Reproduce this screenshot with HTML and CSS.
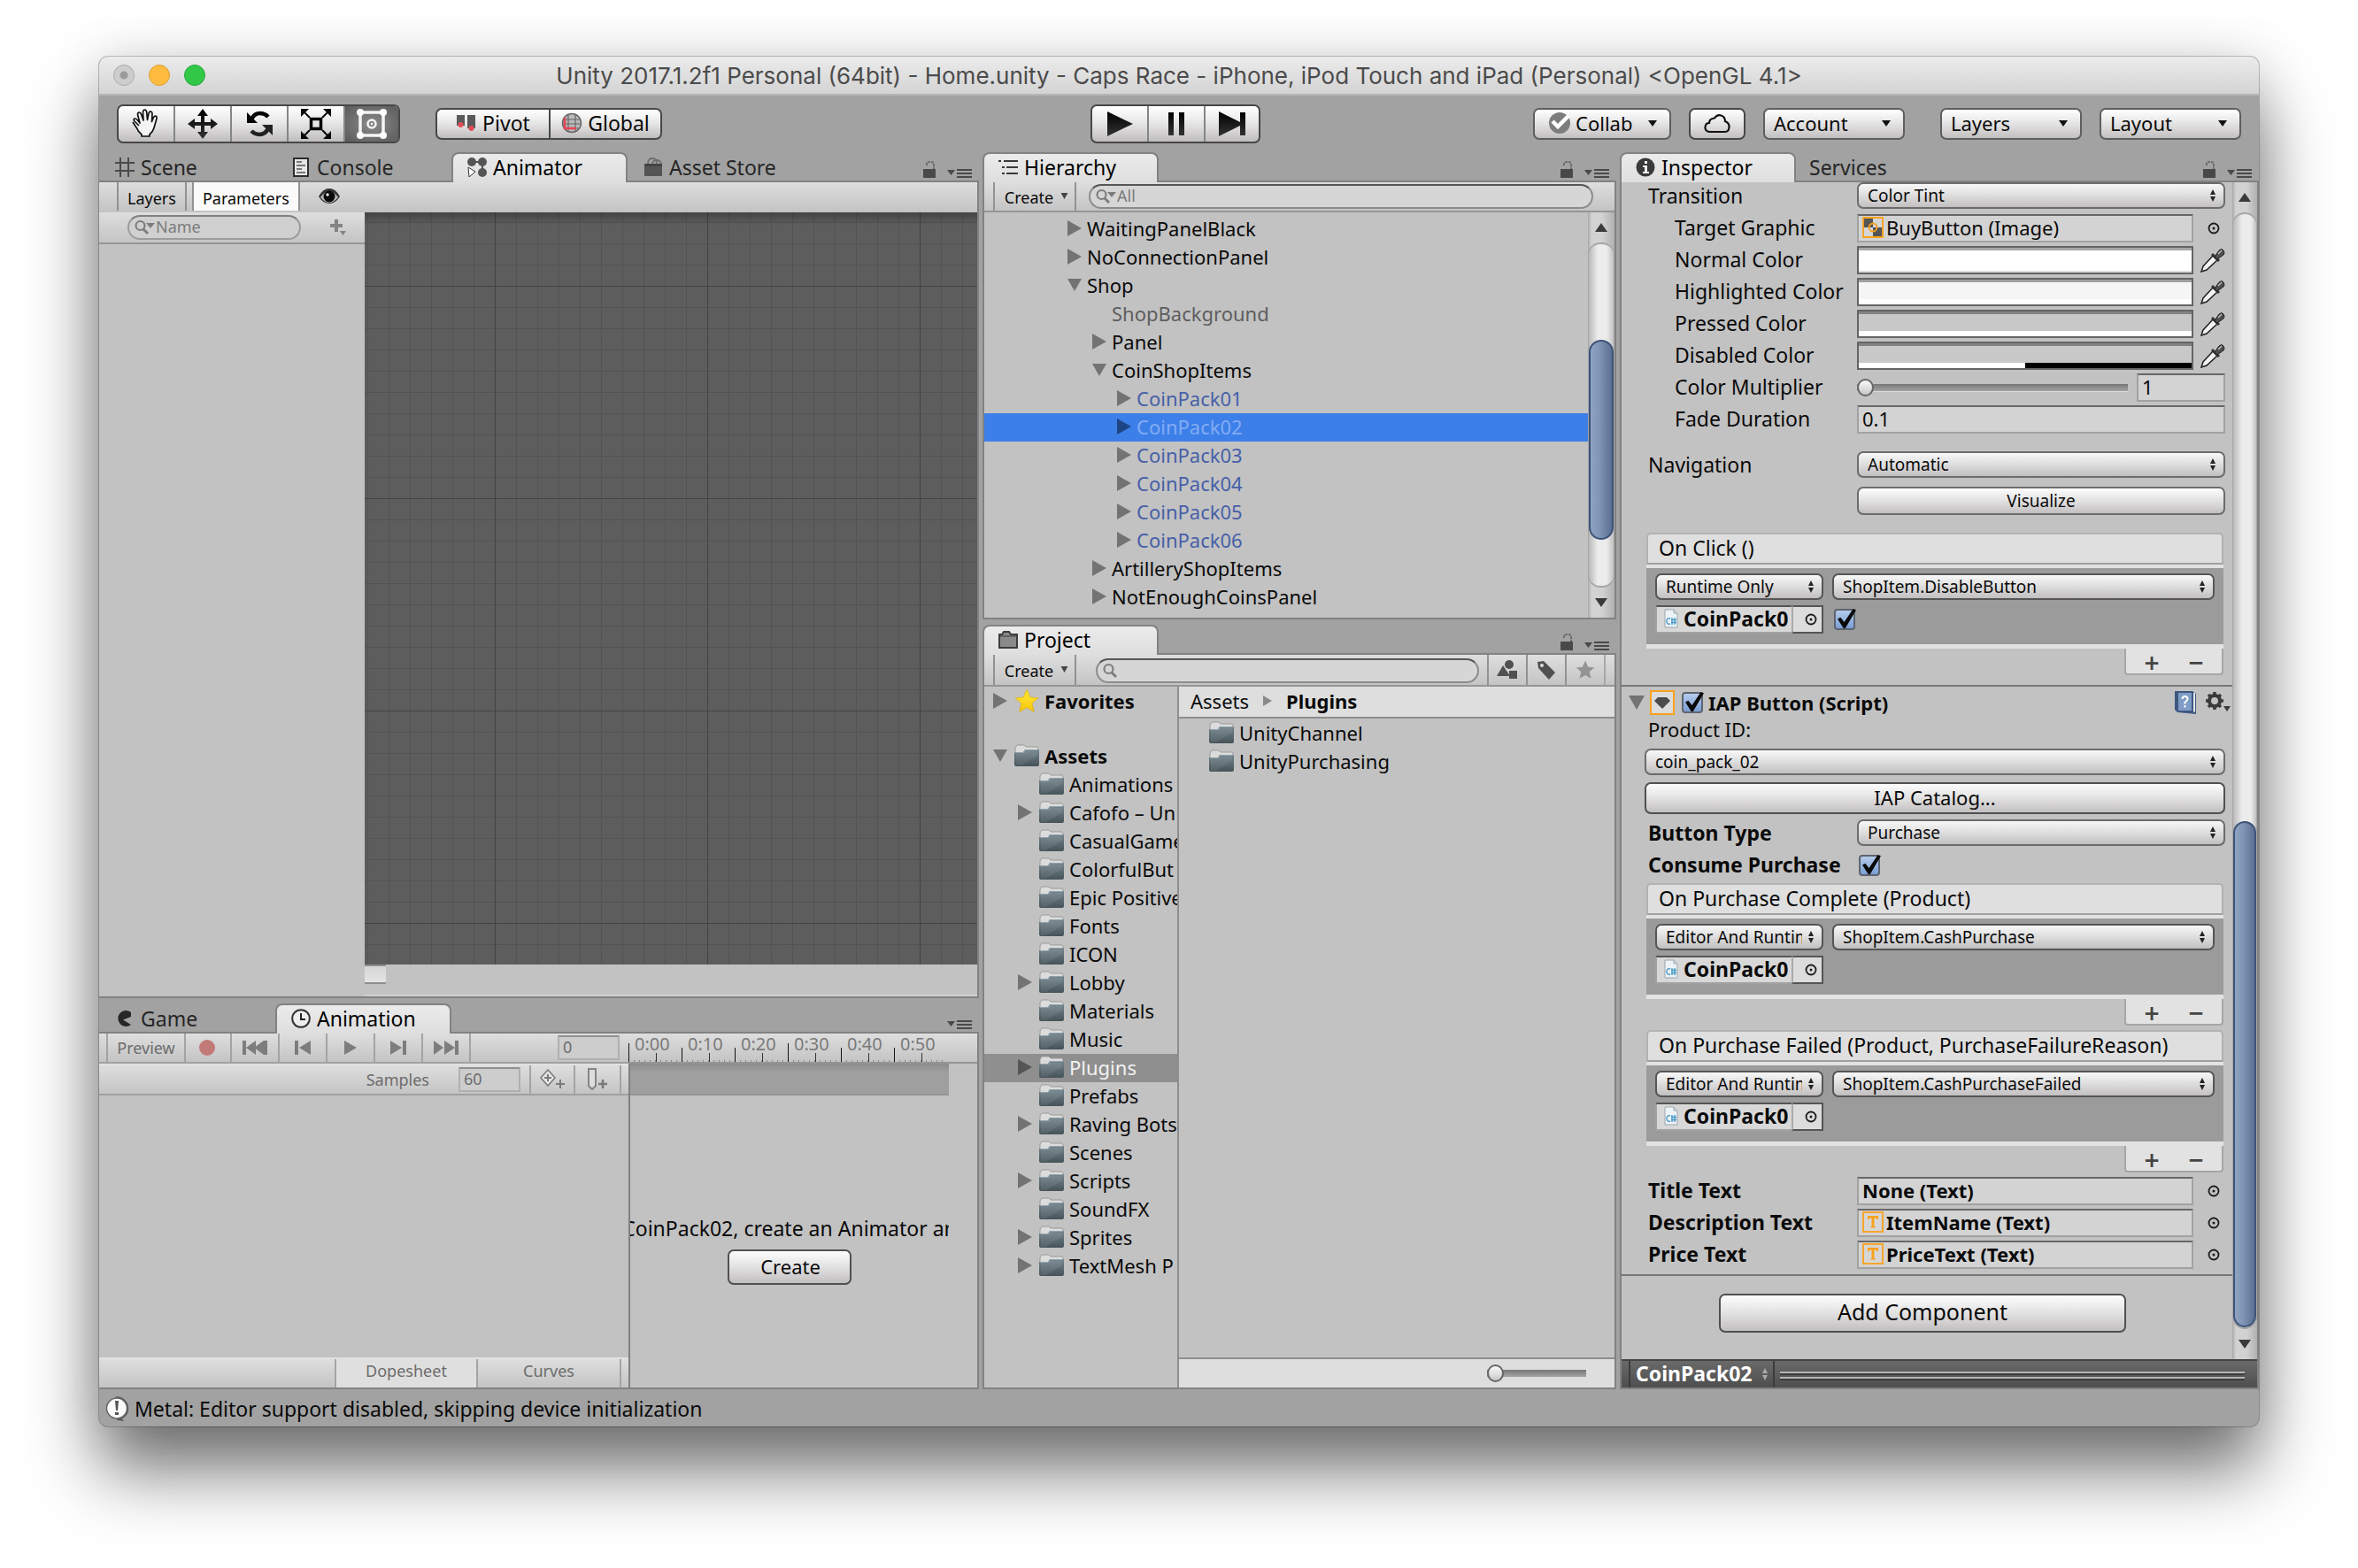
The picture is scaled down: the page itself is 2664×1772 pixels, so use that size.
FILE: index.html
```html
<!DOCTYPE html>
<html lang="en">
<head>
<meta charset="utf-8">
<title>Unity 2017.1.2f1 Personal</title>
<link rel="stylesheet" href="styles.css">
</head>
<body>
<svg class="sprite" aria-hidden="true">
  <defs>
    <linearGradient id="g-folder" x1="0" y1="0" x2="0" y2="1"><stop offset="0" stop-color="#75868e"/><stop offset="1" stop-color="#465359"/></linearGradient>
    <linearGradient id="g-star" x1="0" y1="0" x2="0" y2="1"><stop offset="0" stop-color="#ffe93a"/><stop offset="1" stop-color="#f7c60a"/></linearGradient>
    <linearGradient id="g-dark" x1="0" y1="0" x2="0" y2="1"><stop offset="0" stop-color="#000"/><stop offset="1" stop-color="#333"/></linearGradient>
  </defs>
  <symbol id="folder" viewBox="0 0 28 26">
    <path d="M1 8V4l2-3h8l2 2h13l1 2v5H1z" fill="#dcdcdc" stroke="#9a9a9a" stroke-width="1"/>
    <path d="M0 9h10l2-3h16v17q0 2-2 2H2q-2 0-2-2z" fill="url(#g-folder)"/>
    <path d="M12 8h14v5L8 24H2V10h8z" fill="#fff" opacity=".07"/>
    <path d="M1 9.500h10l2-3h14" fill="none" stroke="#8fa3ad" stroke-width="1"/>
  </symbol>
  <symbol id="star" viewBox="0 0 28 28"><path d="M14 1l4 9 9 .8-7 6.200 2.300 9.500L14 21.500 5.700 26.500 8 17 1 10.800 10 10z" fill="url(#g-star)" stroke="#d9a400" stroke-width=".6"/></symbol>
  <symbol id="right" viewBox="0 0 16 18"><path d="M0 0l16 9-16 9z"/></symbol>
  <symbol id="down" viewBox="0 0 18 16"><path d="M0 0h18l-9 16z"/></symbol>
  <symbol id="lock" viewBox="0 0 16 20"><path d="M1 9h14v10H1z" fill="#494949"/><path d="M5 5V3q0-2 3-2h2q3 0 3 3v5" fill="none" stroke="#6a6a6a" stroke-width="2" stroke-dasharray="3 1"/></symbol>
  <symbol id="menu" viewBox="0 0 28 12"><path d="M0 2h9L4.500 8z" fill="#494949"/><path d="M11 1h17v2H11zM11 5h17v2H11zM11 9h17v2H11z" fill="#494949"/></symbol>
  <symbol id="search" viewBox="0 0 24 18"><circle cx="6.500" cy="7" r="5" fill="none" stroke="#7d7d7d" stroke-width="2.200"/><path d="M10 11l5 5" stroke="#7d7d7d" stroke-width="3"/></symbol>
  <symbol id="searchmenu" viewBox="0 0 24 18"><circle cx="6.500" cy="7" r="5" fill="none" stroke="#7d7d7d" stroke-width="2.200"/><path d="M10 11l5 5" stroke="#7d7d7d" stroke-width="3"/><path d="M13 4h10l-5 6z" fill="#7d7d7d"/></symbol>
  <symbol id="picker" viewBox="0 0 14 14"><circle cx="7" cy="7" r="5.500" fill="none" stroke="#1c1c1c" stroke-width="1.800"/><circle cx="7" cy="7" r="1.500" fill="#1c1c1c"/></symbol>
  <symbol id="dropper" viewBox="0 0 28 28">
    <path d="M1 27l2-6L14 9l5 5L7 25z" fill="#f2f2f2" stroke="#222" stroke-width="1.500"/>
    <path d="M13 7l8 8" stroke="#333" stroke-width="3"/><path d="M16 10l5-7q3-3 5 0t0 5l-7 5z" fill="#4e4e4e" stroke="#222"/><path d="M20 7l4-4" stroke="#bbb" stroke-width="1.500"/>
  </symbol>
  <symbol id="cs" viewBox="0 0 16 22"><path d="M1 1h10l4 4v16H1z" fill="#eef3f6" stroke="#9aa7b0"/><path d="M11 1v4h4" fill="#cfdae0" stroke="#9aa7b0"/><path d="M7 11q-4-1-4 3t4 3M9 10v8M12 10v8M8 12.500h6M8 15.500h6" fill="none" stroke="#4a9cc8" stroke-width="1.400"/></symbol>
  <symbol id="texticon" viewBox="0 0 24 24"><rect x="1" y="1" width="22" height="22" fill="#d6d6d6" stroke="#f9a11b" stroke-width="1.800"/><path d="M6 5h12v4h-1.500l-1-1.500h-2V17l2 1.500H8.500l2-1.500V7.500h-2l-1 1.500H6z" fill="#f9a11b"/></symbol>
</svg>

<main class="window">
  <header class="titlebar">
    <div class="lights"><i class="light off"></i><i class="light min"></i><i class="light max"></i></div>
    <h1 class="title">Unity 2017.1.2f1 Personal (64bit) - Home.unity - Caps Race - iPhone, iPod Touch and iPad (Personal) &lt;OpenGL 4.1&gt;</h1>
  </header>

  <nav class="toolbar">
    <div class="tools">
      <div class="group tall">
        <button class="seg" aria-label="Hand"><svg width="36" height="36" viewBox="0 0 36 36"><path d="M10 20L4.500 14.500q-1-2.500 1-2.500 1.500 0 3.500 2.500L11 17 8.500 7.500q0-2.500 1.500-2.500t2.500 2l2.500 7-.5-9.500q.5-2.500 2-2.500t2.200 2.500l.8 9 1.500-7.500q1-2.500 2.500-2t1.500 2.500l-.5 9 2-5q1.500-2 2.800-1.200t.7 2.700l-3 10.500q-1.500 5-5 7.500v2h-9v-2q-4-3-5-6.500L3 16" fill="#f4f4f4" stroke="#111" stroke-width="1.700" stroke-linejoin="round"/></svg></button>
        <button class="seg" aria-label="Move"><svg width="36" height="36" viewBox="0 0 36 36"><path d="M18 1l6 8h-4v7h7v-4l8 6-8 6v-4h-7v7h4l-6 8-6-8h4v-7H9v4l-8-6 8-6v4h7V9h-4z" fill="url(#g-dark)"/></svg></button>
        <button class="seg" aria-label="Rotate"><svg width="36" height="36" viewBox="0 0 36 36"><path d="M9 13q3-7 10-7 5 0 9 4" fill="none" stroke="#050505" stroke-width="4.500"/><path d="M4 5v12h12z" fill="#050505"/><path d="M28 23q-3 7-10 7-5 0-9-4" fill="none" stroke="#222" stroke-width="4.500"/><path d="M33 31V19H21z" fill="#222"/></svg></button>
        <button class="seg" aria-label="Scale"><svg width="36" height="36" viewBox="0 0 36 36" fill="none" stroke="#080808"><rect x="12.500" y="12.500" width="11" height="11" stroke-width="3.500"/><path d="M11 11L4 4M25 11l7-7M11 25l-7 7M25 25l7 7" stroke-width="2"/><path d="M1 1h9L1 10zM35 1v9l-9-9zM1 35v-9l9 9zM35 35h-9l9-9z" fill="#080808" stroke="none"/></svg></button>
        <button class="seg pressed" aria-label="Rect"><svg width="36" height="36" viewBox="0 0 36 36" fill="none" stroke="#f4f4f4"><path d="M5 5h26v26H5z" stroke-width="3.500"/><g fill="#fff" stroke="none"><circle cx="5" cy="5" r="4"/><circle cx="31" cy="5" r="4"/><circle cx="5" cy="31" r="4"/><circle cx="31" cy="31" r="4"/></g><circle cx="18" cy="18" r="4.500" stroke-width="2.500"/><circle cx="18" cy="18" r="1.200" fill="#fff" stroke="none"/></svg></button>
      </div>
      <div class="group short">
        <button class="seg wide"><svg width="24" height="20" viewBox="0 0 24 20"><path d="M1 1h9v12H1zM13 1h9v15h-9z" fill="#5a5a5a"/><circle cx="5.500" cy="12" r="3" fill="#e24b57"/><circle cx="17.500" cy="16" r="3" fill="#e24b57"/></svg>Pivot</button>
        <button class="seg wide"><svg width="24" height="24" viewBox="0 0 24 24"><circle cx="12" cy="12" r="10.500" fill="#b9b9b9" stroke="#666" stroke-width="1.500"/><path d="M2 8h20M2 13h20M4 18h16M8 2v20M16 2v20" stroke="#666" stroke-width="1.200"/><path d="M4 6v12h13" fill="none" stroke="#ea4456" stroke-width="2.500"/></svg>Global</button>
      </div>
    </div>
    <div class="group tall play">
      <button class="seg" aria-label="Play"><svg width="32" height="32" viewBox="0 0 32 32"><path d="M2 2l29 14L2 30z" fill="url(#g-dark)"/></svg></button>
      <button class="seg" aria-label="Pause"><svg width="32" height="32" viewBox="0 0 32 32"><path d="M7 3h6v26H7zM19 3h6v26h-6z" fill="url(#g-dark)"/></svg></button>
      <button class="seg" aria-label="Step"><svg width="32" height="32" viewBox="0 0 32 32"><path d="M1 2l24 12V3h6v26h-6V18L1 30z" fill="url(#g-dark)"/></svg></button>
    </div>
    <div class="services">
      <button class="pop collab"><svg width="30" height="26" viewBox="0 0 30 26"><circle cx="14" cy="13" r="12" fill="#7d7d7d"/><path d="M6 11l6 6L24 5" fill="none" stroke="#fff" stroke-width="4.500"/></svg>Collab<i class="caret"></i></button>
      <button class="pop cloud" aria-label="Cloud"><svg width="30" height="24" viewBox="0 0 30 24"><path d="M6 21q-5-1-4.500-5.500T6 11q0-5 6-5.500Q15 1 19.500 2.500T24 9q5 2 4.500 7T24 21z" fill="none" stroke="#111" stroke-width="2.200"/></svg></button>
      <button class="pop">Account<i class="caret"></i></button>
      <button class="pop layers">Layers<i class="caret"></i></button>
      <button class="pop">Layout<i class="caret"></i></button>
    </div>
  </nav>

  <div class="workspace">
    <div class="column left-column">
      <section class="pane">
        <div class="tabs">
          <button class="tab"><svg width="22" height="22" viewBox="0 0 22 22" stroke="#4a4a4a" stroke-width="2"><path d="M6 0v22M15 0v22M0 6h22M0 15h22"/></svg>Scene</button>
          <button class="tab"><svg width="22" height="22" viewBox="0 0 22 22"><path d="M3 1h16v20H3z" fill="#e6e6e6" stroke="#2d2d2d" stroke-width="2"/><path d="M6 5h6M6 9h10M6 13h6M6 17h10" stroke="#555" stroke-width="1.500"/></svg>Console</button>
          <button class="tab active"><svg width="22" height="22" viewBox="0 0 22 22" fill="#555"><circle cx="5" cy="5" r="5"/><circle cx="17" cy="5" r="5"/><circle cx="17" cy="17" r="5"/><path d="M5 5h12v12" fill="none" stroke="#555" stroke-width="2"/><path d="M1 11l8 5-7 6z" fill="#fff" stroke="#333"/></svg>Animator</button>
          <button class="tab"><svg width="22" height="22" viewBox="0 0 22 22"><path d="M1 7h20v14H1z" fill="#555"/><path d="M1 7h20v3H1z" fill="#444"/><path d="M5 7q0-6 5-6t5 6M10 7q1-4 5-4t5 4" fill="none" stroke="#6e6e6e" stroke-width="1.800"/></svg>Asset Store</button>
          <div class="tab-tools"><svg width="16" height="20"><use href="#lock"/></svg><svg width="28" height="12"><use href="#menu"/></svg></div>
        </div>
        <div class="pane-body">
          <div class="bar animator-bar">
            <button class="bar-btn">Layers</button>
            <button class="bar-btn on">Parameters</button>
            <svg class="eye" width="26" height="20" viewBox="0 0 26 20"><path d="M1 10Q6 1 13 1t12 9q-5 8-12 8T1 10z" fill="#333"/><path d="M3 11q5-7 10-7t10 7q-5 6-10 6T3 11z" fill="#bbb"/><circle cx="13" cy="10" r="6.500" fill="#0a0a0a"/><circle cx="11" cy="8" r="1.700" fill="#eee"/></svg>
          </div>
          <div class="animator">
            <div class="params">
              <div class="bar params-bar">
                <label class="search dim"><svg width="24" height="18"><use href="#searchmenu"/></svg><input type="text" placeholder="Name" aria-label="Parameter name"></label>
                <svg width="20" height="20" viewBox="0 0 20 20" fill="#838383"><path d="M6 1h4v5h5v4h-5v5H6v-5H1V6h5zM12 14h7l-3.500 5z"/></svg>
              </div>
            </div>
            <div class="graph-wrap">
              <div class="graph"></div>
              <div class="graph-foot"><i class="knob"></i></div>
            </div>
          </div>
        </div>
      </section>

      <section class="pane">
        <div class="tabs">
          <button class="tab"><svg width="22" height="22" viewBox="0 0 22 22"><path d="M18 4A9 9 0 1 0 18 18L9 12.500 18 9z" fill="#262626"/></svg>Game</button>
          <button class="tab active"><svg width="22" height="22" viewBox="0 0 22 22"><circle cx="11" cy="11" r="9.800" fill="#eee" stroke="#333" stroke-width="2"/><path d="M11 5v7h5" fill="none" stroke="#222" stroke-width="2"/></svg>Animation</button>
          <div class="tab-tools"><svg width="28" height="12"><use href="#menu"/></svg></div>
        </div>
        <div class="pane-body animation">
          <div class="clip">
            <div class="bar">
              <button class="bar-btn dis preview">Preview</button>
              <button class="bar-btn dis record" aria-label="Record"><svg width="18" height="18" viewBox="0 0 18 18"><circle cx="9" cy="9" r="9" fill="#c17a77"/></svg></button>
              <button class="bar-btn dis" aria-label="First frame"><svg width="28" height="16" viewBox="0 0 28 16" fill="#7d7d7d"><path d="M0 0h4v16H0zM15 0v16L4 8zM24 0v16L13 8zM24 0h4v16h-4z"/></svg></button>
              <button class="bar-btn dis" aria-label="Previous frame"><svg width="18" height="16" viewBox="0 0 18 16" fill="#7d7d7d"><path d="M0 0h4v16H0zM18 0v16L5 8z"/></svg></button>
              <button class="bar-btn dis" aria-label="Play clip"><svg width="14" height="16" viewBox="0 0 14 16" fill="#7d7d7d"><path d="M0 0l14 8-14 8z"/></svg></button>
              <button class="bar-btn dis" aria-label="Next frame"><svg width="18" height="16" viewBox="0 0 18 16" fill="#7d7d7d"><path d="M14 0h4v16h-4zM0 0v16l13-8z"/></svg></button>
              <button class="bar-btn dis" aria-label="Last frame"><svg width="28" height="16" viewBox="0 0 28 16" fill="#7d7d7d"><path d="M24 0h4v16h-4zM0 0v16l11-8zM12 0v16l12-8z"/></svg></button>
              <input class="num frame" type="text" value="0" aria-label="Frame">
            </div>
            <div class="bar second">
              <label class="samples" for="samples">Samples</label>
              <input class="num" id="samples" type="text" value="60">
              <button class="bar-btn dis first" aria-label="Add keyframe"><svg width="28" height="24" viewBox="0 0 28 24"><path d="M9 1l8 9-8 9-8-9z" fill="#e4e4e4" stroke="#7a7a7a" stroke-width="1.500"/><path d="M5 10h8M9 6v8M18 17h10M23 12v10" stroke="#7a7a7a" stroke-width="2"/></svg></button>
              <button class="bar-btn dis" aria-label="Add event"><svg width="24" height="26" viewBox="0 0 24 26"><path d="M2 1h8v19l-4 4-4-4z" fill="#ddd" stroke="#858585" stroke-width="2"/><path d="M13 18h10M18 13v10" stroke="#7a7a7a" stroke-width="2.500"/></svg></button>
            </div>
            <div class="clip-list"></div>
            <div class="bar modes">
              <button class="mode on">Dopesheet</button>
              <button class="mode">Curves</button>
            </div>
          </div>
          <div class="timeline">
            <div class="bar ruler"><span class="tick tall-tick">0:00</span><span class="tick">0:10</span><span class="tick">0:20</span><span class="tick tall-tick">0:30</span><span class="tick">0:40</span><span class="tick">0:50</span></div>
            <div class="sheet">
              <div class="events"></div>
              <p class="hint"><span>CoinPack02, create an Animator an</span></p>
              <button class="btn create">Create</button>
            </div>
          </div>
        </div>
      </section>
    </div>

    <div class="column mid-column">
      <section class="pane">
        <div class="tabs">
          <button class="tab active"><svg width="22" height="18" viewBox="0 0 22 18" fill="#3a3a3a"><path d="M0 1h3v2H0zM6 1h16v2H6zM4 8h3v2H4zM9 8h13v2H9zM4 15h3v2H4zM9 15h13v2H9z"/></svg>Hierarchy</button>
          <div class="tab-tools"><svg width="16" height="20"><use href="#lock"/></svg><svg width="28" height="12"><use href="#menu"/></svg></div>
        </div>
        <div class="pane-body framed">
          <div class="bar">
            <button class="bar-btn createmenu">Create<svg width="9" height="7"><use href="#down"/></svg></button>
            <label class="search"><svg width="24" height="18"><use href="#searchmenu"/></svg><input type="text" placeholder="All" aria-label="Search hierarchy"></label>
          </div>
          <div class="scroll-area">
            <ul class="tree hierarchy">
              <li class="l0"><svg class="fold" width="16" height="18"><use href="#right"/></svg>WaitingPanelBlack</li>
              <li class="l0"><svg class="fold" width="16" height="18"><use href="#right"/></svg>NoConnectionPanel</li>
              <li class="l0"><svg class="fold" width="18" height="16"><use href="#down"/></svg>Shop</li>
              <li class="l1 leaf inactive">ShopBackground</li>
              <li class="l1"><svg class="fold" width="16" height="18"><use href="#right"/></svg>Panel</li>
              <li class="l1"><svg class="fold" width="18" height="16"><use href="#down"/></svg>CoinShopItems</li>
              <li class="l2 prefab"><svg class="fold" width="16" height="18"><use href="#right"/></svg>CoinPack01</li>
              <li class="l2 prefab selected"><svg class="fold" width="16" height="18"><use href="#right"/></svg>CoinPack02</li>
              <li class="l2 prefab"><svg class="fold" width="16" height="18"><use href="#right"/></svg>CoinPack03</li>
              <li class="l2 prefab"><svg class="fold" width="16" height="18"><use href="#right"/></svg>CoinPack04</li>
              <li class="l2 prefab"><svg class="fold" width="16" height="18"><use href="#right"/></svg>CoinPack05</li>
              <li class="l2 prefab"><svg class="fold" width="16" height="18"><use href="#right"/></svg>CoinPack06</li>
              <li class="l1"><svg class="fold" width="16" height="18"><use href="#right"/></svg>ArtilleryShopItems</li>
              <li class="l1"><svg class="fold" width="16" height="18"><use href="#right"/></svg>NotEnoughCoinsPanel</li>
            </ul>
            <div class="sbar"><i class="up"></i><div class="track track-hier"><i class="thumb"></i></div><i class="dn"></i></div>
          </div>
        </div>
      </section>

      <section class="pane">
        <div class="tabs">
          <button class="tab active"><svg width="22" height="22" viewBox="0 0 22 22"><path d="M1 5h3l2-3h6l2 3h7v15H1z" fill="#8a8a8a" stroke="#3c3c3c" stroke-width="2"/><path d="M1 7h20" stroke="#3c3c3c"/></svg>Project</button>
          <div class="tab-tools"><svg width="16" height="20"><use href="#lock"/></svg><svg width="28" height="12"><use href="#menu"/></svg></div>
        </div>
        <div class="pane-body framed">
          <div class="bar project-bar">
            <button class="bar-btn createmenu">Create<svg width="9" height="7"><use href="#down"/></svg></button>
            <label class="search"><svg width="24" height="18"><use href="#search"/></svg><input type="text" aria-label="Search assets"></label>
            <button class="bar-btn icon" aria-label="Filter by type"><svg width="24" height="22" viewBox="0 0 24 22" fill="#505050"><circle cx="14" cy="5" r="5"/><path d="M7 6l8 12H0zM14 12h9v9h-9z"/></svg></button>
            <button class="bar-btn icon" aria-label="Filter by label"><svg width="24" height="24" viewBox="0 0 24 24"><path d="M2 3l7-1 13 13-7 8L3 10z" fill="#505050"/><circle cx="7" cy="7" r="2" fill="#ddd"/></svg></button>
            <button class="bar-btn icon" aria-label="Save search"><svg width="22" height="22" viewBox="0 0 28 28"><path d="M14 1l4 9 9 .8-7 6.200 2.300 9.500L14 21.500 5.700 26.500 8 17 1 10.800 10 10z" fill="#939393"/></svg></button>
          </div>
          <div class="project">
            <ul class="tree folders">
              <li class="root"><svg class="fold" width="16" height="18"><use href="#right"/></svg><svg width="28" height="28"><use href="#star"/></svg>Favorites</li>
              <li class="root assets"><svg class="fold" width="18" height="16"><use href="#down"/></svg><svg width="28" height="26"><use href="#folder"/></svg>Assets</li>
              <li class="leaf"><svg width="28" height="26"><use href="#folder"/></svg>Animations</li>
              <li><svg class="fold" width="16" height="18"><use href="#right"/></svg><svg width="28" height="26"><use href="#folder"/></svg>Cafofo – Un</li>
              <li class="leaf"><svg width="28" height="26"><use href="#folder"/></svg>CasualGame</li>
              <li class="leaf"><svg width="28" height="26"><use href="#folder"/></svg>ColorfulBut</li>
              <li class="leaf"><svg width="28" height="26"><use href="#folder"/></svg>Epic Positive</li>
              <li class="leaf"><svg width="28" height="26"><use href="#folder"/></svg>Fonts</li>
              <li class="leaf"><svg width="28" height="26"><use href="#folder"/></svg>ICON</li>
              <li><svg class="fold" width="16" height="18"><use href="#right"/></svg><svg width="28" height="26"><use href="#folder"/></svg>Lobby</li>
              <li class="leaf"><svg width="28" height="26"><use href="#folder"/></svg>Materials</li>
              <li class="leaf"><svg width="28" height="26"><use href="#folder"/></svg>Music</li>
              <li class="current"><svg class="fold" width="16" height="18"><use href="#right"/></svg><svg width="28" height="26"><use href="#folder"/></svg>Plugins</li>
              <li class="leaf"><svg width="28" height="26"><use href="#folder"/></svg>Prefabs</li>
              <li><svg class="fold" width="16" height="18"><use href="#right"/></svg><svg width="28" height="26"><use href="#folder"/></svg>Raving Bots</li>
              <li class="leaf"><svg width="28" height="26"><use href="#folder"/></svg>Scenes</li>
              <li><svg class="fold" width="16" height="18"><use href="#right"/></svg><svg width="28" height="26"><use href="#folder"/></svg>Scripts</li>
              <li class="leaf"><svg width="28" height="26"><use href="#folder"/></svg>SoundFX</li>
              <li><svg class="fold" width="16" height="18"><use href="#right"/></svg><svg width="28" height="26"><use href="#folder"/></svg>Sprites</li>
              <li><svg class="fold" width="16" height="18"><use href="#right"/></svg><svg width="28" height="26"><use href="#folder"/></svg>TextMesh P</li>
            </ul>
            <div class="contents">
              <div class="crumbs"><a href="#assets">Assets</a><svg width="10" height="12" viewBox="0 0 16 18" preserveAspectRatio="none" fill="#8a8a8a"><path d="M0 0l16 9-16 9z"/></svg><b>Plugins</b></div>
              <ul class="tree files">
                <li><svg width="28" height="26"><use href="#folder"/></svg>UnityChannel</li>
                <li><svg width="28" height="26"><use href="#folder"/></svg>UnityPurchasing</li>
              </ul>
              <div class="zoombar"><input class="range" type="range" min="0" max="100" value="0" aria-label="Icon size"></div>
            </div>
          </div>
        </div>
      </section>
    </div>

    <div class="column">
      <section class="pane">
        <div class="tabs">
          <button class="tab active"><svg width="22" height="22" viewBox="0 0 22 22"><circle cx="11" cy="11" r="10.500" fill="#3a3a3a"/><path d="M8 9h5v7h2v2H8v-2h2v-5H8zM10 4h3v3h-3z" fill="#f2f2f2"/></svg>Inspector</button>
          <button class="tab plain">Services</button>
          <div class="tab-tools"><svg width="16" height="20"><use href="#lock"/></svg><svg width="28" height="12"><use href="#menu"/></svg></div>
        </div>
        <div class="pane-body framed">
          <div class="scroll-area">
            <div class="inspector">
              <div class="component">
                <div class="field"><label for="transition">Transition</label><span class="select"><select id="transition"><option>Color Tint</option></select></span></div>
                <div class="field sub"><span>Target Graphic</span><div class="object"><button class="slot"><svg width="24" height="24" viewBox="0 0 24 24"><path d="M1 1h22v22H1z" fill="#d6d6d6"/><path d="M1 1h11v11H1zM12 12h11v11H12z" fill="#555"/><path d="M1 1h22v22H1z" fill="none" stroke="#f9a11b" stroke-width="1.800"/><circle cx="12" cy="12" r="4.500" fill="none" stroke="#f9a11b" stroke-width="1.800"/></svg>BuyButton (Image)</button><button class="pick" aria-label="Pick target graphic"><svg width="14" height="14"><use href="#picker"/></svg></button></div></div>
                <div class="field sub"><label for="c-normal">Normal Color</label><div class="color"><span class="swatch"><input type="color" id="c-normal" value="#ffffff"><i class="alpha faint"></i></span><button class="drop" aria-label="Pick normal color"><svg width="28" height="28"><use href="#dropper"/></svg></button></div></div>
                <div class="field sub"><label for="c-high">Highlighted Color</label><div class="color"><span class="swatch"><input type="color" id="c-high" value="#f5f5f5"><i class="alpha"></i></span><button class="drop" aria-label="Pick highlighted color"><svg width="28" height="28"><use href="#dropper"/></svg></button></div></div>
                <div class="field sub"><label for="c-press">Pressed Color</label><div class="color"><span class="swatch"><input type="color" id="c-press" value="#c8c8c8"><i class="alpha"></i></span><button class="drop" aria-label="Pick pressed color"><svg width="28" height="28"><use href="#dropper"/></svg></button></div></div>
                <div class="field sub"><label for="c-dis">Disabled Color</label><div class="color"><span class="swatch"><input type="color" id="c-dis" value="#c8c8c8"><i class="alpha half"></i></span><button class="drop" aria-label="Pick disabled color"><svg width="28" height="28"><use href="#dropper"/></svg></button></div></div>
                <div class="field sub"><label for="mult">Color Multiplier</label><div class="slider"><input class="range" id="mult" type="range" min="1" max="5" value="1"><input class="text" type="text" value="1" aria-label="Color multiplier value"></div></div>
                <div class="field sub"><label for="fade">Fade Duration</label><input class="text" id="fade" type="text" value="0.1"></div>
                <div class="field spaced"><label for="nav">Navigation</label><span class="select"><select id="nav"><option>Automatic</option></select></span></div>
                <div class="field visualize"><span></span><button class="btn mini">Visualize</button></div>
                <div class="event click">
                  <h2 class="event-title">On Click ()</h2>
                  <div class="event-body">
                    <span class="select"><select aria-label="Call state"><option>Runtime Only</option></select></span>
                    <span class="select"><select aria-label="Function"><option>ShopItem.DisableButton</option></select></span>
                    <div class="target"><button class="slot"><svg width="16" height="22"><use href="#cs"/></svg>CoinPack0</button><button class="pick" aria-label="Pick object"><svg width="14" height="14"><use href="#picker"/></svg></button></div>
                    <input type="checkbox" checked aria-label="Argument">
                  </div>
                  <div class="event-foot"><button aria-label="Add">+</button><button aria-label="Remove">−</button></div>
                </div>
              </div>

              <div class="component iap">
                <div>
                  <div class="component-head">
                    <svg class="fold" width="18" height="16"><use href="#down"/></svg>
                    <svg class="gem" width="28" height="28" viewBox="0 0 28 28"><path d="M1 1h26v26H1z" fill="#dcdcdc" stroke="#f9a11b" stroke-width="2"/><path d="M9 8h10l4 4-9 9-9-9z" fill="#4b4b4b"/></svg>
                    <label class="enable"><input type="checkbox" checked>IAP Button (Script)</label>
                    <svg class="book" width="26" height="28" viewBox="0 0 26 28"><path d="M1 1h20l4 3v23L4 25l-3-3z" fill="#3d577f"/><path d="M5 3h15v20H5z" fill="#7f9cc6"/><path d="M22 3h2v22l-2-1z" fill="#e5e9f0"/><path d="M9.500 10q0-3 3-3t3 3q0 1.500-3 3.500v2M12.500 17v2.500" fill="none" stroke="#fff" stroke-width="2"/></svg>
                    <svg width="28" height="26" viewBox="0 0 28 26"><g fill="none" stroke="#3a3a3a"><circle cx="10" cy="11" r="6" stroke-width="4"/><path d="M10 1v4M10 17v4M0 11h4M16 11h4M3 4l3 3M14 15l3 3M3 18l3-3M14 7l3-3" stroke-width="3.500"/></g><path d="M20 17h8l-4 6z" fill="#3a3a3a"/></svg>
                  </div>
                  <label class="product" for="product">Product ID:</label>
                </div>
                <span class="select full"><select id="product"><option>coin_pack_02</option></select></span>
                <button class="btn catalog">IAP Catalog...</button>
                <div class="field strong type"><label for="btype">Button Type</label><span class="select"><select id="btype"><option>Purchase</option></select></span></div>
                <div class="field strong"><label for="consume">Consume Purchase</label><input type="checkbox" id="consume" checked></div>
                <div class="event">
                  <h2 class="event-title">On Purchase Complete (Product)</h2>
                  <div class="event-body">
                    <span class="select"><select aria-label="Call state"><option>Editor And Runtime</option></select></span>
                    <span class="select"><select aria-label="Function"><option>ShopItem.CashPurchase</option></select></span>
                    <div class="target"><button class="slot"><svg width="16" height="22"><use href="#cs"/></svg>CoinPack0</button><button class="pick" aria-label="Pick object"><svg width="14" height="14"><use href="#picker"/></svg></button></div>
                  </div>
                  <div class="event-foot"><button aria-label="Add">+</button><button aria-label="Remove">−</button></div>
                </div>
                <div class="event">
                  <h2 class="event-title">On Purchase Failed (Product, PurchaseFailureReason)</h2>
                  <div class="event-body">
                    <span class="select"><select aria-label="Call state"><option>Editor And Runtime</option></select></span>
                    <span class="select"><select aria-label="Function"><option>ShopItem.CashPurchaseFailed</option></select></span>
                    <div class="target"><button class="slot"><svg width="16" height="22"><use href="#cs"/></svg>CoinPack0</button><button class="pick" aria-label="Pick object"><svg width="14" height="14"><use href="#picker"/></svg></button></div>
                  </div>
                  <div class="event-foot"><button aria-label="Add">+</button><button aria-label="Remove">−</button></div>
                </div>
                <div class="field strong"><span>Title Text</span><div class="object"><button class="slot">None (Text)</button><button class="pick" aria-label="Pick title text"><svg width="14" height="14"><use href="#picker"/></svg></button></div></div>
                <div class="field strong"><span>Description Text</span><div class="object"><button class="slot"><svg width="24" height="24"><use href="#texticon"/></svg>ItemName (Text)</button><button class="pick" aria-label="Pick description text"><svg width="14" height="14"><use href="#picker"/></svg></button></div></div>
                <div class="field strong"><span>Price Text</span><div class="object"><button class="slot"><svg width="24" height="24"><use href="#texticon"/></svg>PriceText (Text)</button><button class="pick" aria-label="Pick price text"><svg width="14" height="14"><use href="#picker"/></svg></button></div></div>
              </div>
              <div class="add"><button class="btn add-btn">Add Component</button></div>
            </div>
            <div class="sbar"><i class="up"></i><div class="track track-insp"><i class="thumb"></i></div><i class="dn"></i></div>
          </div>
          <div class="preview-bar">
            <button class="preview-name">CoinPack02<i class="updown"></i></button>
            <i class="grip"></i>
          </div>
        </div>
      </section>
    </div>
  </div>

  <footer class="status"><svg width="28" height="28" viewBox="0 0 28 28"><path d="M14 1a12.500 12.500 0 1 1 0 25l6 1-3-3A12.500 12.500 0 0 1 14 1z" fill="#fff" stroke="#555" stroke-width="1.500"/><circle cx="14" cy="13.500" r="11.500" fill="#fafafa" stroke="#666" stroke-width="1.500"/><path d="M12 5h4l-1 11h-2zM12 18h4v3h-4z" fill="#555"/></svg>Metal: Editor support disabled, skipping device initialization</footer>
</main>
</body>
</html>
```

FILE: styles.css
```css
:root {
  --panel: #c2c2c2;
  --chrome: #a2a2a2;
  --line: #828282;
  --fs-small: 18px;
  --fs-popup: 19px;
  --fs: 22px;
  --fs-large: 23px;
}

* { box-sizing: border-box; }

body {
  margin: 0;
  padding: 64px 112px 160px;
  height: 100vh;
  background: #fff;
  overflow: hidden;
  color: #0a0a0a;
  font-family: "Noto Sans", "Open Sans", sans-serif;
  font-size: var(--fs);
  line-height: 32px;
}

button, input, select { font: inherit; color: inherit; margin: 0; }
button { padding: 0; border: 0; background: none; border-radius: 0; }
ul { list-style: none; margin: 0; padding: 0; }
h1, h2, p { margin: 0; font-weight: 400; }
svg { display: block; flex: none; }
.sprite { position: absolute; width: 0; height: 0; }

.window {
  display: flex;
  flex-direction: column;
  height: 100%;
  border-radius: 10px;
  background: var(--chrome);
  overflow: clip;
  box-shadow: 0 0 0 1px rgba(0, 0, 0, .22), 0 50px 80px rgba(0, 0, 0, .55), 0 0 60px rgba(0, 0, 0, .12);
}

/* title bar */
.titlebar {
  display: grid;
  grid-template-columns: 1fr auto 1fr;
  align-items: center;
  height: 44px;
  flex: none;
  padding: 0 16px;
  background: linear-gradient(#ececec, #d3d3d3);
  border-bottom: 2px solid #b6b6b6;
}
.lights { display: flex; gap: 16px; }
.light { width: 24px; height: 24px; border-radius: 50%; border: 1px solid; }
.light.off { border-color: #aaa; background: radial-gradient(circle, #9a9a9a 4px, #cdcdcd 5px); }
.light.min { border-color: #dc9e34; background: #fdbc40; }
.light.max { border-color: #24a73a; background: #33c748; }
.title { padding-top: 2px; font-family: Inter, Roboto, sans-serif; font-size: 26px; color: #4b4b4b; white-space: nowrap; }

/* main toolbar */
.toolbar {
  display: grid;
  grid-template-columns: 1fr auto 1fr;
  align-items: center;
  flex: none;
  height: 64px;
  padding: 0 20px;
}
.tools, .services { display: flex; align-items: center; }
.tools { gap: 40px; }
.group {
  display: flex;
  border: 2px solid #474747;
  border-radius: 7px;
  overflow: hidden;
  background: linear-gradient(#fff, #e6e5e5 50%, #bfbcbd);
}
.tall { height: 44px; }
.short { height: 36px; }
.play { margin-right: 8px; }
.seg { display: flex; align-items: center; justify-content: center; width: 64px; }
.group.tall .seg:first-child, .group.tall .seg:last-child { width: 62px; }
.seg + .seg { border-left: 2px solid #858585; }
.seg.pressed { background: radial-gradient(#8a8a8a, #5a5a5a); }
.seg.wide { width: 126px; gap: 6px; font-size: var(--fs-large); padding-bottom: 2px; }
.seg.wide + .seg.wide { border-left-color: #474747; }
.services { justify-content: flex-end; gap: 20px; }
.pop {
  display: flex;
  align-items: center;
  width: 160px;
  height: 36px;
  padding: 0 14px 2px 10px;
  border: 2px solid #5e5e5e;
  border-radius: 7px;
  background: linear-gradient(#fff, #e4e3e3 50%, #c2bfc0);
}
.pop.collab { width: 156px; padding-left: 14px; }
.pop.collab svg { margin-right: 2px; }
.pop.cloud { width: 64px; justify-content: center; padding: 0; border-color: #474747; }
.pop.layers { margin-left: 20px; }
.caret { margin-left: auto; border: 5px solid transparent; border-top: 7px solid #111; border-bottom: 0; }

/* panes */
.workspace {
  flex: 1;
  min-height: 0;
  display: grid;
  grid-template-columns: 994fr 716fr 722fr;
  grid-template-rows: minmax(0, 1fr);
  column-gap: 4px;
}
.column { display: grid; row-gap: 6px; min-width: 0; min-height: 0; grid-template-rows: minmax(0, 1fr); }
.left-column { grid-template-rows: minmax(0, 956fr) minmax(0, 436fr); }
.mid-column { grid-template-rows: minmax(0, 528fr) minmax(0, 864fr); }
.pane { display: flex; flex-direction: column; min-width: 0; min-height: 0; }
.tabs { display: flex; flex: none; height: 34px; box-shadow: inset 0 -2px var(--line); }
.tab {
  display: flex;
  align-items: center;
  gap: 7px;
  width: 199px;
  padding: 0 0 0 18px;
  font-size: var(--fs-large);
  color: #262626;
}
.tab.active {
  border: 2px solid var(--line);
  border-bottom: 0;
  border-radius: 8px 8px 0 0;
  padding: 0 0 2px 16px;
  background: linear-gradient(#ebebeb, #dedede);
  color: #000;
}
.tab.plain { padding-left: 15px; }
.tab-tools { display: flex; align-items: flex-end; gap: 12px; margin-left: auto; padding: 0 8px 4px 0; }
.pane-body {
  flex: 1;
  display: flex;
  flex-direction: column;
  min-height: 0;
  background: var(--panel);
  border: solid var(--line);
  border-width: 0 2px 2px 0;
}
.pane-body.framed { border-left-width: 2px; }

.bar {
  display: flex;
  align-items: stretch;
  flex: none;
  height: 34px;
  background: linear-gradient(#dedede, #c4c4c4);
  border-bottom: 2px solid #959595;
  font-size: var(--fs-small);
}
.bar-btn {
  display: flex;
  align-items: center;
  justify-content: center;
  padding: 2px 10px 0;
  border: solid #929292;
  border-width: 0 2px;
}
.bar-btn.on { background: #fafafa; }
.bar-btn.dis { color: #6c6c6c; border-color: #a4a4a4; width: 54px; padding: 0; border-left: 0; }
.createmenu { width: 94px; gap: 8px; padding: 2px 6px 0 10px; margin: 0 14px 0 10px; }
.createmenu svg { fill: #444; margin-bottom: 4px; }

.search {
  display: flex;
  align-items: center;
  flex: 1;
  height: 28px;
  margin: 2px 24px 0 0;
  padding-left: 6px;
  border: 2px solid #8c8c8c;
  border-top-color: #555;
  border-radius: 14px;
  background: #d6d6d6;
  min-width: 0;
}
.search.dim { border-color: #9c9c9c; border-top-color: #808080; background: #d0d0d0; }
.search input { flex: 1; min-width: 0; height: 24px; padding: 0 0 2px; border: 0; background: none; outline: 0; }
.search input::placeholder { color: #7b7b7b; opacity: 1; }

/* animator */
.animator-bar { padding-left: 20px; gap: 6px; border-bottom-color: #c4c4c4; }
.animator-bar .bar-btn { padding-top: 4px; }
.animator-bar .eye { align-self: center; margin-left: 14px; }
.animator { flex: 1; display: grid; grid-template-columns: 300px 1fr; min-height: 0; }
.params-bar { height: 36px; align-items: center; }
.params-bar .search { margin: 0 32px 0 32px; }
.params-bar > svg { margin-right: 20px; }
.graph-wrap { display: flex; flex-direction: column; }
.graph {
  flex: 1;
  background-color: #5d5d5d;
  background-image:
    linear-gradient(rgba(0, 0, 0, .28), transparent 14px),
    linear-gradient(90deg, #434343 1px, transparent 1px),
    linear-gradient(#434343 1px, transparent 1px),
    linear-gradient(90deg, #535353 1px, transparent 1px),
    linear-gradient(#535353 1px, transparent 1px);
  background-size: auto, 240px 240px, 240px 240px, 24px 24px, 24px 24px;
  background-position: 0 0, 147px 0, 0 83px, 3px 0, 0 11px;
}
.graph-foot { height: 36px; border-bottom: 2px solid #d0d0d0; }
.knob { display: block; width: 24px; height: 22px; background: linear-gradient(#d6d6d6, #e4e4e4); border: solid #909090; border-width: 2px 0; }

/* animation */
.animation { flex-direction: row; }
.clip { width: 598px; display: flex; flex-direction: column; }
.clip .bar { border-bottom-color: #a0a0a0; }
.clip .bar .preview { width: 90px; margin-left: 8px; border-left: 2px solid #a4a4a4; }
.clip .bar .record { width: 52px; padding-right: 2px; }
.num { width: 70px; height: 28px; padding: 0 0 2px 4px; border: 2px solid #b0b0b0; border-top-color: #909090; background: #cdcdcd; color: #6c6c6c; }
.num.frame { margin: 2px 10px 0 auto; }
.clip .second { height: 36px; align-items: center; justify-content: flex-end; padding-right: 8px; color: #6c6c6c; border-top: 2px solid #e2e2e2; }
.second .num { margin: 0 10px 0 33px; }
.second .bar-btn { align-self: stretch; width: 52px; }
.second .bar-btn.first { border-left: 2px solid #a4a4a4; }
.clip-list { flex: 1; }
.clip .modes { border-bottom: 0; border-top: 2px solid #e2e2e2; justify-content: flex-end; padding-right: 8px; }
.mode { width: 162px; color: #6c6c6c; border: solid #a4a4a4; border-width: 0 2px 0 0; padding-bottom: 6px; line-height: 24px; }
.mode.on { background: #dfdfdf; border-left-width: 2px; }
.timeline { flex: 1; display: flex; flex-direction: column; min-width: 0; }
.ruler { color: #7a7a7a; line-height: 24px; font-size: 20px; }
.tick {
  width: 60px;
  flex: none;
  padding-left: 7px;
  background:
    linear-gradient(#111, #111) 0 100% / 1px 16px no-repeat,
    linear-gradient(#333, #333) 31px 100% / 1px 10px no-repeat,
    repeating-linear-gradient(90deg, #888 0 1px, transparent 1px 6px) 0 100% / 100% 2px no-repeat;
}
.tall-tick { background-size: 1px 21px, 1px 10px, 100% 2px; }
.sheet { flex: 1; display: flex; flex-direction: column; border-left: 2px solid #808080; padding-right: 32px; align-items: center; }
.events { align-self: stretch; height: 36px; background: linear-gradient(#8c8c8c, #9f9f9f 10px); border-bottom: 2px solid #959595; }
.hint { align-self: stretch; display: flex; justify-content: center; overflow: hidden; white-space: nowrap; margin: 134px 0 8px; font-size: var(--fs-large); }
.btn {
  border: 2px solid #505050;
  border-radius: 7px;
  background: linear-gradient(#fdfdfd, #e2e1e1 50%, #c2bfc0);
  line-height: 28px;
}
.create { width: 140px; height: 40px; padding: 0 0 2px 2px; }

/* trees */
.scroll-area { flex: 1; display: flex; min-height: 0; }
.tree { white-space: nowrap; }
.tree li { display: flex; align-items: center; height: 32px; gap: 6px; padding-bottom: 2px; }
.fold { fill: #737373; }
.hierarchy { flex: 1; padding-top: 3px; overflow: hidden; min-width: 0; }
.hierarchy .l0 { padding-left: 94px; }
.hierarchy .l1 { padding-left: 122px; }
.hierarchy .l2 { padding-left: 150px; }
.tree .fold { width: 16px; }
.hierarchy .leaf { padding-left: 144px; }
.inactive { color: #5e5e5e; }
.prefab { color: #4760a8; }
.prefab.selected { background: #3d7fe8; color: #82acf5; }
.selected .fold { fill: #1d4484; }

.sbar { width: 30px; flex: none; display: flex; flex-direction: column; background: linear-gradient(90deg, #a8a8a8, #d2d2d2 4px, #d2d2d2 16px, #b0b0b0); }
.inspector + .sbar { width: 28px; }
.up, .dn { height: 34px; display: flex; align-items: center; justify-content: center; }
.up::before, .dn::before { content: ""; border: 7px solid transparent; border-bottom: 10px solid #3a3a3a; border-top: 0; }
.dn::before { border-top: 10px solid #3a3a3a; border-bottom: 0; }
.track { flex: 1; display: grid; border-radius: 14px; border: 2px solid #a6a6a6; border-width: 2px 1px; background: linear-gradient(90deg, #b8b8b8, #ececec 10px, #ececec 20px, #c0c0c0); }
.track-hier { grid-template-rows: 109fr 228fr 52fr; }
.track-insp { grid-template-rows: 688fr 573fr 0fr; }
.thumb { grid-row: 2; border-radius: 14px; border: 2px solid #3e5478; background: linear-gradient(90deg, #8fa3c2, #8196b6 40%, #5c6f92); }

/* project */
.project-bar { height: 36px; }
.project-bar .search { margin: 4px 9px 0 8px; }
.project-bar .icon { width: 44px; padding: 0; border-right: 0; }
.project-bar .icon:last-child { width: 46px; border-right: 2px solid #a8a8a8; margin-right: 10px; }
.project { flex: 1; display: grid; grid-template-columns: 220px 1fr; min-height: 0; }
.folders { border-right: 2px solid #8e8e8e; padding-top: 1px; overflow: hidden; }
.folders li { padding-left: 38px; gap: 8px; }
.folders li.leaf { padding-left: 62px; }
.folders li.root { padding-left: 10px; font-weight: 700; }
.folders svg + svg, .folders .leaf svg { margin-right: -2px; }
.folders .assets { margin-top: 30px; }
.folders .current { background: #8f8f8f; color: #f2f2f2; }
.current .fold { fill: #555; }
.contents { display: flex; flex-direction: column; min-width: 0; }
.crumbs { display: flex; align-items: center; gap: 16px; height: 36px; padding: 0 0 2px 13px; background: #dedede; border-bottom: 2px solid #8e8e8e; }
.crumbs a { color: inherit; text-decoration: none; }
.files { flex: 1; padding: 1px 0 0 34px; }
.zoombar { display: flex; align-items: center; justify-content: flex-end; height: 34px; padding-right: 32px; background: #dedede; border-top: 2px solid #8e8e8e; }
.range { appearance: none; width: 112px; height: 22px; background: linear-gradient(#777, #a4a4a4 8px, #ddd 8px) 0 50% / 100% 9px no-repeat; border-radius: 5px; outline: 0; }
.range::-webkit-slider-thumb { appearance: none; width: 19px; height: 20px; border-radius: 50%; border: 2px solid #666; background: linear-gradient(#fafafa, #c8c8c8); }

/* inspector */
.inspector { flex: 1; min-width: 0; overflow: hidden; }
.component { display: flex; flex-direction: column; gap: 4px; padding-bottom: 10px; }
.iap { border-top: 2px solid #777; border-bottom: 2px solid #777; padding-bottom: 6px; }
.field { display: grid; grid-template-columns: 236px 1fr; height: 32px; padding: 0 8px 0 30px; white-space: nowrap; line-height: 30px; }
.field > :first-child { font-size: var(--fs-large); }
.field.sub > :first-child { padding-left: 30px; }
.field.strong { font-weight: 700; }
.field.spaced { margin-top: 16px; }
.field.visualize { margin-top: 4px; }
.field.type { margin-top: 2px; }
.select { position: relative; display: flex; height: 30px; min-width: 0; font-weight: 400; }
.select select {
  appearance: none;
  width: 100%;
  height: 30px;
  padding: 0 20px 0 10px;
  border: 2px solid #6c6c6c;
  border-radius: 7px;
  background: linear-gradient(#f8f8f8, #dedddd 50%, #c2bfc0);
  font-size: var(--fs-popup);
  line-height: 24px;
  outline: 0;
}
.select::before, .select::after, .updown::before, .updown::after {
  content: "";
  position: absolute;
  right: 11px;
  top: 8px;
  border: 3px solid transparent;
  border-bottom: 6px solid #222;
  border-top: 0;
}
.select::after, .updown::after { top: 16px; border-top: 6px solid #222; border-bottom: 0; }
.select.full { margin: 4px 8px 0 26px; }
.catalog { height: 36px; margin: 4px 8px 0 26px; padding-bottom: 2px; }
.mini { font-size: var(--fs-popup); border-color: #6c6c6c; }
.object, .color, .slider, .target { display: flex; min-width: 0; }
.slot {
  display: flex;
  align-items: center;
  gap: 3px;
  flex: 1;
  min-width: 0;
  height: 32px;
  padding: 0 0 2px 4px;
  border: 2px solid #a2a2a2;
  border-top-color: #676767;
  background: #d3d3d3;
  overflow: hidden;
}
.pick { width: 36px; display: flex; align-items: center; justify-content: center; padding-left: 10px; }
.swatch { flex: 1; display: flex; flex-direction: column; height: 32px; border: 2px solid #646464; }
.swatch input { appearance: none; display: block; width: 100%; height: 22px; padding: 0; border: 0; background: none; border-radius: 0; }
.swatch input::-webkit-color-swatch-wrapper { padding: 0; }
.swatch input::-webkit-color-swatch { border: 0; border-top: 3px solid rgba(0, 0, 0, .35); border-radius: 0; }
.alpha { height: 6px; background: #fff; }
.alpha.faint { border-bottom: 2px solid #ddd; }
.alpha.half { background: linear-gradient(90deg, #fff 50%, #000 50%); }
.drop { width: 36px; display: flex; align-items: center; justify-content: flex-end; }
.text { height: 32px; min-width: 0; padding: 0 0 2px 4px; border: 2px solid #a2a2a2; border-top-color: #676767; background: #d3d3d3; outline: 0; border-radius: 0; }
.slider .range { flex: 1; min-width: 0; align-self: center; }
.slider .text { width: 100px; margin-left: 10px; }

input[type="checkbox"] {
  appearance: none;
  position: relative;
  width: 24px;
  height: 24px;
  flex: none;
  border: 2px solid #5d6470;
  border-radius: 4px;
  background: linear-gradient(#b4cbea, #7b9fd6);
}
input[type="checkbox"]::before {
  content: "";
  position: absolute;
  inset: -2px -3px 0 2px;
  background: #0a0a0a;
  clip-path: polygon(0 52%, 16% 44%, 36% 68%, 84% 0, 100% 6%, 42% 100%, 32% 100%);
}
.field input[type="checkbox"] { margin: 4px 0 0 2px; }

.event { display: grid; margin: 0 10px 1px 28px; white-space: nowrap; }
.event.click { margin-top: 16px; }
.event-title { height: 36px; padding-left: 12px; border: 2px solid #b2b2b2; border-bottom-color: #a0a0a0; border-radius: 5px 5px 0 0; background: #dfdfdf; font-size: var(--fs-large); line-height: 30px; }
.event-body {
  display: grid;
  grid-template-columns: 190px 1fr;
  grid-template-rows: 30px 32px;
  gap: 6px 10px;
  height: 95px;
  padding: 6px 10px 12px;
  border: solid #e2e2e2;
  border-width: 4px 0 5px;
  background: #9b9b9b;
}
.event-body select { padding-right: 22px; border-color: #555; }
.event-body .slot { font-weight: 700; font-size: var(--fs-large); padding-left: 8px; gap: 6px; background: #d8d8d8; border-width: 2px 0 2px 2px; border-top-color: #555; }
.event-body .pick { background: #dcdcdc; border: 2px solid #555; border-left-color: #aaa; padding-left: 8px; }
.event-body input { margin: 4px 0 0 2px; }
.event-foot { justify-self: end; display: flex; width: 112px; height: 30px; background: #e2e2e2; border: solid #a6a6a6; border-width: 0 2px 2px; border-radius: 0 0 4px 4px; padding: 2px 4px 0; }
.event-foot button { flex: 1; font-size: 30px; font-weight: 600; line-height: 28px; color: #444; }
.component-head { display: flex; align-items: center; height: 36px; padding: 0 2px 0 8px; }
.component-head .gem { margin: 0 8px 0 6px; }
.enable { display: flex; align-items: center; gap: 6px; font-weight: 700; }
.book { margin: 0 10px 0 auto; }
.product { display: block; height: 26px; line-height: 24px; padding-left: 30px; }
.add { display: flex; justify-content: center; padding: 20px 10px 0 0; }
.add-btn { width: 460px; height: 44px; font-size: 25px; padding-bottom: 4px; }

.preview-bar { display: flex; flex: none; height: 32px; align-items: stretch; padding-left: 8px; background: linear-gradient(#6a6a6a, #4e4e4e); border-top: 2px solid #444; }
.preview-name { position: relative; width: 165px; padding-left: 6px; text-align: left; color: #fff; font-size: var(--fs-large); font-weight: 700; line-height: 26px; padding-bottom: 2px; border: solid #3c3c3c; border-width: 0 2px; }
.updown::before, .updown::after { right: 6px; border-bottom-color: #aaa; }
.updown::after { border-top-color: #aaa; }
.grip { flex: 1; margin: 12px 14px 8px 6px; background: linear-gradient(#b6b6b6 2px, #3c3c3c 2px 4px, #5a5a5a 4px 6px, #b6b6b6 6px 8px, #3c3c3c 8px 10px); }

.status { display: flex; align-items: center; gap: 6px; flex: none; height: 42px; padding: 2px 0 0 6px; font-size: var(--fs-large); white-space: nowrap; }
```
